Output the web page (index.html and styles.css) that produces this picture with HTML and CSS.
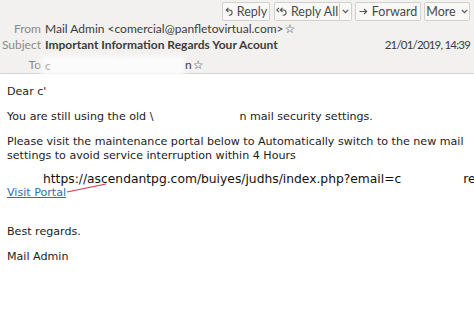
FILE: index.html
```html
<!DOCTYPE html>
<html>
<head>
    <title>Important Information Regards Your Acount</title>
    <link rel="stylesheet" href="styles.css">
</head>
<body>
    <div class="header">
        <div class="toolbar">
            <button class="btn btn-reply">
                <svg class="ico" width="8" height="9" viewBox="0 0 8 9"><path d="M3.5 0.8 L1.2 3 L3.5 5.2 M1.4 3 H4.5 A2.6 2.6 0 0 1 4.5 8.2 H3.8" fill="none" stroke="#555" stroke-width="1.1"/></svg>
                Reply
            </button>
            <div class="split">
                <button class="btn btn-all">
                    <svg class="ico" width="11" height="9" viewBox="0 0 11 9"><path d="M3 0.8 L0.8 3 L3 5.2 M6.5 0.8 L4.3 3 L6.5 5.2 M4.5 3 H7.5 A2.6 2.6 0 0 1 7.5 8.2 H6.8" fill="none" stroke="#555" stroke-width="1.1"/></svg>
                    Reply All
                </button>
                <button class="btn btn-drop">
                    <svg width="7" height="5" viewBox="0 0 7 5"><path d="M0.8 0.8 L3.5 3.6 L6.2 0.8" fill="none" stroke="#555" stroke-width="1.2"/></svg>
                </button>
            </div>
            <button class="btn btn-fwd">
                <svg class="ico" width="9" height="7" viewBox="0 0 9 7"><path d="M0.5 3.5 H7.5 M5 1 L7.7 3.5 L5 6" fill="none" stroke="#555" stroke-width="1.1"/></svg>
                Forward
            </button>
            <button class="btn btn-more">
                More
                <svg class="caret" width="7" height="5" viewBox="0 0 7 5"><path d="M0.8 0.8 L3.5 3.6 L6.2 0.8" fill="none" stroke="#555" stroke-width="1.2"/></svg>
            </button>
        </div>
        <div class="row row-from">
            <span class="label">From</span>
            <span class="value">Mail Admin &lt;comercial@panfletovirtual.com&gt;<span class="star">&#x2606;</span></span>
        </div>
        <div class="row row-subject">
            <span class="label">Subject</span>
            <span class="value subject">Important Information Regards Your Acount</span>
            <span class="date">21/01/2019, 14:39</span>
        </div>
        <div class="row row-to">
            <span class="label">To</span>
            <span class="value"><span class="smudge">c</span>n<span class="star">&#x2606;</span></span>
        </div>
    </div>

    <div class="message">
        <p class="p-dear">Dear c'<span class="gap gap-dear"></span></p>
        <p>You are still using the old \<span class="gap gap-old"></span>n mail security settings.</p>
        <p>Please visit the maintenance portal below to Automatically switch to the new mail settings to avoid service interruption within 4 Hours</p>
        <p class="p-link"><a href="#">Visit Portal</a></p>
        <p class="p-regards">Best regards.</p>
        <p>Mail Admin</p>

        <div class="url-tip">https://ascendantpg.com/buiyes/judhs/index.php?email=c<span class="gap gap-url"></span>re</div>
        <svg class="pointer" width="42" height="12" viewBox="0 0 42 12">
            <line x1="1" y1="10" x2="40" y2="2" stroke="#d9364a" stroke-width="1.2"/>
        </svg>
    </div>
</body>
</html>
```

FILE: styles.css
```css
body {
    margin: 0;
    background: #fff;
    font-family: "DejaVu Sans", sans-serif;
    overflow: hidden;
}
.header {
    background: #f2f1f0;
    border-bottom: 1px solid #d6d4d1;
    padding-top: 2px;
    height: 71px;
    font-family: Lato, sans-serif;
    font-size: 12px;
    color: #3c3c3c;
}
.toolbar {
    display: flex;
    justify-content: flex-end;
    gap: 3px;
    padding-right: 4px;
    height: 19px;
}
.btn {
    display: flex;
    align-items: center;
    justify-content: center;
    gap: 4px;
    height: 19px;
    padding: 0;
    border: 1px solid #d3d1ce;
    border-radius: 2px;
    background: #f8f8f7;
    font-family: Lato, sans-serif;
    font-size: 12.5px;
    color: #4a4a4a;
}
.btn-reply {
    width: 48px;
    margin-right: 1px;
}
.btn-all {
    width: 66px;
    border-radius: 2px 0 0 2px;
}
.btn-drop {
    width: 12px;
    border-left: none;
    border-radius: 0 2px 2px 0;
}
.btn-fwd {
    width: 66px;
}
.btn-more {
    width: 46px;
    gap: 5px;
}
.split {
    display: flex;
}
.row {
    display: flex;
    align-items: center;
}
.label {
    width: 41px;
    text-align: right;
    color: #8a8a88;
    margin-right: 4px;
    flex-shrink: 0;
}
.row-from {
    height: 14px;
}
.row-subject {
    height: 19px;
}
.row-to {
    height: 21px;
}
.subject {
    font-weight: bold;
    flex: 1;
}
.date {
    padding-right: 4px;
    color: #3c3c3c;
    font-size: 11.5px;
    letter-spacing: -0.8px;
}
.star {
    font-family: "DejaVu Sans", sans-serif;
    font-size: 12px;
    margin-left: 1px;
}
.smudge {
    display: inline-block;
    width: 136px;
    height: 12px;
    margin-right: 4px;
    vertical-align: middle;
    color: #aaa;
    line-height: 12px;
    background: #fbfbfb;
    box-shadow: 0 0 5px 4px #fbfbfb;
}
.message {
    position: relative;
    width: 480px;
    padding: 11px 7px 0;
    font-size: 11.1px;
    line-height: 14px;
    color: #1c1c1c;
}
.message p {
    margin: 11px 0 0;
}
.message .p-dear {
    margin-top: 0;
}
.message .p-link {
    margin-top: 23px;
}
.message .p-regards {
    margin-top: 25px;
}
.gap {
    display: inline-block;
}
.gap-dear {
    width: 80px;
}
.gap-old {
    width: 86px;
}
.gap-url {
    width: 62px;
}
a {
    color: #2f6cc0;
}
.url-tip {
    position: absolute;
    left: 43px;
    top: 97px;
    font-size: 12.3px;
    line-height: 17px;
    color: #111;
    white-space: nowrap;
}
.pointer {
    position: absolute;
    left: 66px;
    top: 108px;
}
```
